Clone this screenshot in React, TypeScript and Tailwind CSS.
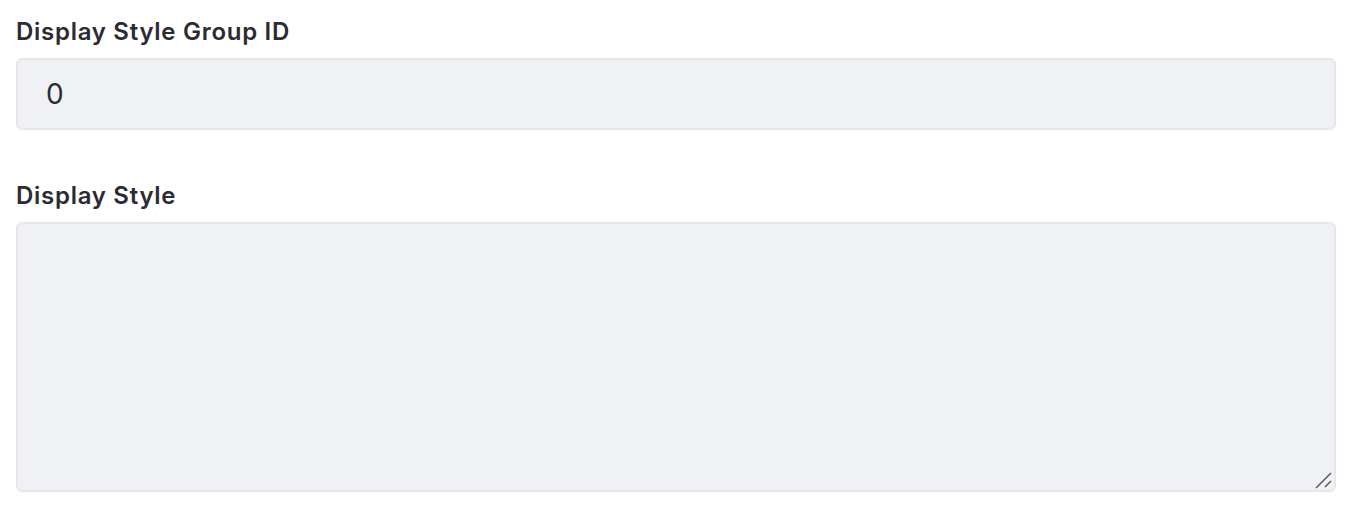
import React from "react";

export default function App() {
  return (
    <div className="w-[1364px] h-[510px] bg-white px-4 pt-[17px]" style={{ fontFamily: "Inter, 'Noto Sans', sans-serif" }}>
      <label className="block text-[24px] font-semibold leading-[30px] tracking-[0.03em] text-[#2b2b33]">Display Style Group ID</label>
      <div className="mt-[11px] w-[1320px] h-[72px] rounded-[6px] border-2 border-[#e6e6ec] bg-[#f0f1f5] flex items-center px-[28px] text-[28px] text-[#2b2b33]">
        0
      </div>
      <label className="block mt-[51px] text-[24px] font-semibold leading-[30px] tracking-[0.03em] text-[#2b2b33]">Display Style</label>
      <div className="relative mt-[11px] w-[1320px] h-[270px] rounded-[6px] border-2 border-[#e6e6ec] bg-[#f0f1f5]">
        <svg className="absolute right-[1px] bottom-[1px]" width="18" height="18" viewBox="0 0 18 18">
          <line x1="1" y1="17" x2="16" y2="2" stroke="#555" strokeWidth="1.4" />
          <line x1="10" y1="16" x2="16" y2="10" stroke="#555" strokeWidth="1.4" />
        </svg>
      </div>
    </div>
  );
}
